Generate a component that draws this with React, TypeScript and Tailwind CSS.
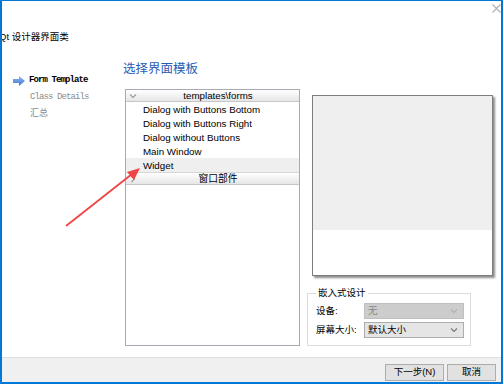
import React from "react";

const cjk = '"Liberation Sans", "Noto Sans CJK SC", sans-serif';
const mono = '"Liberation Mono", "Noto Sans CJK SC", monospace';

function Chevron({ dir, color = "#9a9a9a" }: { dir: "down" | "right"; color?: string }) {
  return (
    <svg width="8" height="8" viewBox="0 0 8 8" className="shrink-0">
      {dir === "down" ? (
        <path d="M1 2.5 L4 5.5 L7 2.5" fill="none" stroke={color} strokeWidth="1.1" />
      ) : (
        <path d="M2.5 1 L5.5 4 L2.5 7" fill="none" stroke={color} strokeWidth="1.1" />
      )}
    </svg>
  );
}

function TreeHeader({ label, dir }: { label: string; dir: "down" | "right" }) {
  return (
    <div className="flex h-[12px] items-center border-b border-[#c6c6c6] bg-gradient-to-b from-[#ffffff] to-[#e6e6e6] pl-[3px]">
      <Chevron dir={dir} />
      <div className="flex-1 text-center text-[9.75px] leading-[13px] text-black" style={{ fontFamily: cjk }}>
        {label}
      </div>
    </div>
  );
}

function Combo({ text, disabled }: { text: string; disabled?: boolean }) {
  return (
    <div
      className={
        "flex h-[16px] w-[100px] items-center justify-between border pl-[3px] pr-[5px] text-[9.5px] leading-[14px] " +
        (disabled ? "border-[#bfbfbf] bg-[#cccccc] text-[#8a8a8a]" : "border-[#adadad] bg-[#e5e5e5] text-black")
      }
      style={{ fontFamily: cjk }}
    >
      <span>{text}</span>
      <Chevron dir="down" color={disabled ? "#b0b0b0" : "#777777"} />
    </div>
  );
}

export default function App() {
  const items = [
    "Dialog with Buttons Bottom",
    "Dialog with Buttons Right",
    "Dialog without Buttons",
    "Main Window",
  ];
  return (
    <div className="relative flex h-[384px] w-[503px] flex-col overflow-hidden border-b-2 border-l-2 border-r-2 border-t border-[#0078d7] bg-white">
      {/* title bar */}
      <div className="flex h-[28px] shrink-0 justify-end">
        <svg width="9" height="9" viewBox="0 0 9 9" className="mt-[3px] mr-[0px]">
          <path d="M0.5 0.5 L8.5 8.5 M8.5 0.5 L0.5 8.5" stroke="#b4b4b4" strokeWidth="1.2" />
        </svg>
      </div>
      <div
        className="ml-[-3px] h-[16px] shrink-0 text-[9.5px] leading-[16px] text-black"
        style={{ fontFamily: cjk }}
      >
        Qt 设计器界面类
      </div>

      {/* main */}
      <div className="flex flex-1">
        {/* left nav */}
        <div className="w-[121px] shrink-0 pl-[11px] pt-[27px]" style={{ fontFamily: mono }}>
          <div className="flex h-[17px] items-center gap-[4px]">
            <svg width="12" height="10" viewBox="0 0 12 10">
              <defs>
                <linearGradient id="ag" x1="0" y1="0" x2="0" y2="1">
                  <stop offset="0" stopColor="#8fb8ee" />
                  <stop offset="1" stopColor="#3d7ad6" />
                </linearGradient>
              </defs>
              <path d="M0 3 L6 3 L6 0 L12 5 L6 10 L6 7 L0 7 Z" fill="url(#ag)" />
            </svg>
            <span className="text-[9px] font-bold tracking-[-0.9px] text-black">Form Template</span>
          </div>
          <div className="flex h-[17px] items-center pl-[17px] text-[9px] tracking-[-0.9px] text-[#8c8c8c]">
            Class Details
          </div>
          <div className="flex h-[17px] items-center pl-[17px] text-[9px] text-[#8c8c8c]">汇总</div>
        </div>

        {/* right content */}
        <div className="flex flex-1 flex-col">
          <div
            className="mt-[16px] h-[16px] text-[12.5px] leading-[17px] text-[#2a5bb3]"
            style={{ fontFamily: cjk }}
          >
            选择界面模板
          </div>
          <div className="flex">
            {/* tree */}
            <div className="ml-[2px] mt-[12px] flex h-[257px] w-[175px] flex-col border border-[#a9a9b3] bg-white">
              <TreeHeader label="templates\forms" dir="down" />
              {items.map((t) => (
                <div
                  key={t}
                  className="h-[14px] overflow-hidden pl-[17px] text-[9.75px] leading-[15px] text-black"
                  style={{ fontFamily: cjk }}
                >
                  {t}
                </div>
              ))}
              <div
                className="h-[14px] overflow-hidden bg-[#efefef] pl-[17px] text-[9.75px] leading-[15px] text-black"
                style={{ fontFamily: cjk }}
              >
                Widget
              </div>
              <div className="border-t border-[#d6d6d6]">
                <TreeHeader label="窗口部件" dir="right" />
              </div>
            </div>

            {/* right column */}
            <div className="ml-[7px] flex flex-col">
              <div className="ml-[5px] mt-[18px] flex h-[181px] w-[181px] flex-col border border-[#7d7d7d] shadow-[2px_2px_2px_rgba(0,0,0,0.45)]">
                <div className="h-[134px] bg-[#efefef]" />
                <div className="flex-1 bg-white" />
              </div>
              <div className="relative mt-[17px] h-[53px] w-[164px] border border-[#dcdcdc] pb-[5px] pl-[8px] pr-[6px] pt-[9px]">
                <div
                  className="absolute left-[8px] top-[-7px] bg-white px-[2px] text-[9.5px] leading-[12px] text-black"
                  style={{ fontFamily: cjk }}
                >
                  嵌入式设计
                </div>
                <div className="flex items-center justify-between">
                  <span className="text-[9.5px] text-black" style={{ fontFamily: cjk }}>设备:</span>
                  <Combo text="无" disabled />
                </div>
                <div className="mt-[3px] flex items-center justify-between">
                  <span className="text-[9.5px] text-black" style={{ fontFamily: cjk }}>屏幕大小:</span>
                  <Combo text="默认大小" />
                </div>
              </div>
            </div>
          </div>
        </div>
      </div>

      {/* bottom bar */}
      <div className="flex h-[25px] shrink-0 justify-end gap-[3px] border-t border-[#dfdfdf] bg-[#f0f0f0] pr-[5px] pt-[6px]">
        <div
          className="flex h-[17px] w-[59px] items-center justify-center border border-[#adadad] bg-[#e1e1e1] text-[9.5px] text-black"
          style={{ fontFamily: cjk }}
        >
          下一步(N)
        </div>
        <div
          className="flex h-[17px] w-[49px] items-center justify-center border border-[#adadad] bg-[#e1e1e1] text-[9.5px] text-black"
          style={{ fontFamily: cjk }}
        >
          取消
        </div>
      </div>

      {/* red annotation arrow */}
      <svg className="pointer-events-none absolute left-[-2px] top-[-1px]" width="503" height="384">
        <line x1="66" y1="226" x2="132" y2="174" stroke="#f04545" strokeWidth="1.8" />
        <path d="M140 168 L127 172 L134 180 Z" fill="#f04545" />
      </svg>
    </div>
  );
}
